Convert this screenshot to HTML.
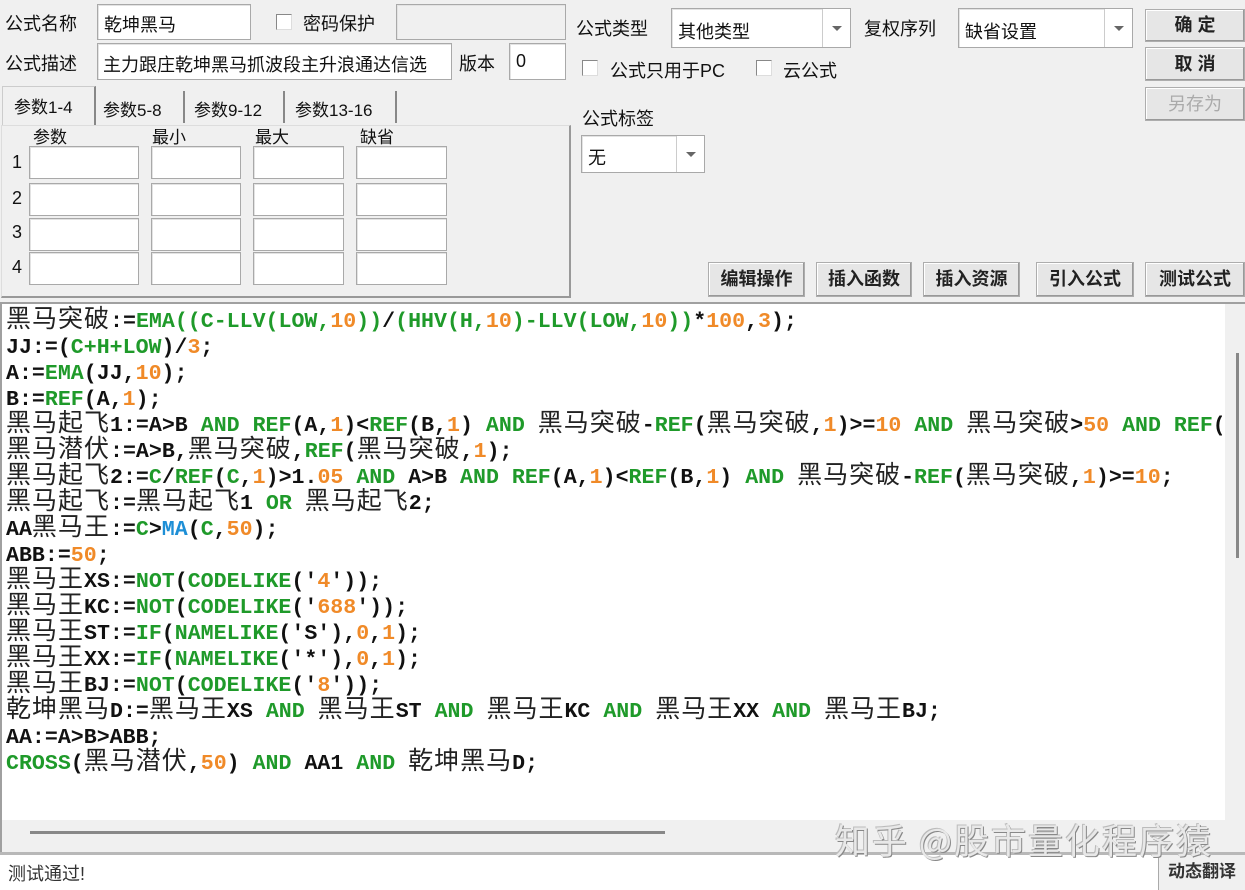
<!DOCTYPE html>
<html><head><meta charset="utf-8"><style>
*{margin:0;padding:0;box-sizing:border-box}
body{width:1245px;height:890px;background:#f0f0f0;position:relative;overflow:hidden;font-family:"Liberation Sans","Noto Sans CJK SC",sans-serif;font-size:18px;color:#111}
.a{position:absolute;white-space:nowrap}
.in{position:absolute;background:#fff;border:1px solid #a9a9a9;box-shadow:inset 1px 1px 0 #e3e3e3}
.cb{position:absolute;width:16px;height:16px;background:#fff;border:1px solid #888;border-right-color:#ddd;border-bottom-color:#ddd}
.btn{position:absolute;background:#e6e6e6;border:1px solid #adadad;box-shadow:inset -1px -1px 0 #999,inset 1px 1px 0 #fff;text-align:center;font-size:18px;font-weight:bold;color:#222}
.dd{position:absolute;top:0;right:0;bottom:0;width:28px;border-left:1px solid #ccc;background:#fff}
.dd:after{content:"";position:absolute;left:9px;top:50%;margin-top:-2px;border-left:5px solid transparent;border-right:5px solid transparent;border-top:5px solid #666}
.code{position:absolute;left:4px;font-family:"Liberation Mono",monospace;font-weight:bold;font-size:21.6px;line-height:26px;height:26px;white-space:nowrap;color:#111;letter-spacing:0}
.code .z{font-family:"Noto Sans CJK SC",sans-serif;font-weight:normal;font-size:25px;letter-spacing:1px;color:#222;line-height:0}
.g{color:#1f9a2a}.o{color:#f08a28}.b{color:#1e8fd6}
</style></head><body>
<div class="a" style="left:5px;top:10px;font-size:18px">公式名称</div>
<div class="in" style="left:97px;top:4px;width:154px;height:36px"><span class="a" style="left:6px;top:6px">乾坤黑马</span></div>
<div class="cb" style="left:276px;top:14px"></div>
<div class="a" style="left:303px;top:10px">密码保护</div>
<div class="in" style="left:396px;top:4px;width:170px;height:36px;background:#f0f0f0"></div>
<div class="a" style="left:5px;top:50px">公式描述</div>
<div class="in" style="left:97px;top:43px;width:355px;height:37px;overflow:hidden"><span class="a" style="left:5px;top:7px">主力跟庄乾坤黑马抓波段主升浪通达信选</span></div>
<div class="a" style="left:459px;top:50px">版本</div>
<div class="in" style="left:509px;top:43px;width:57px;height:37px"><span class="a" style="left:6px;top:7px">0</span></div>
<div class="a" style="left:2px;top:86px;width:94px;height:40px;border:1px solid #ccc;border-bottom:none;border-right:2px solid #888;background:#f0f0f0"></div>
<div class="a" style="left:14px;top:93px;font-size:17px">参数1-4</div>
<div class="a" style="left:103px;top:96px;font-size:17px">参数5-8</div>
<div class="a" style="left:183px;top:91px;width:2px;height:32px;background:#888"></div>
<div class="a" style="left:194px;top:96px;font-size:17px">参数9-12</div>
<div class="a" style="left:283px;top:91px;width:2px;height:32px;background:#888"></div>
<div class="a" style="left:295px;top:96px;font-size:17px">参数13-16</div>
<div class="a" style="left:395px;top:91px;width:2px;height:32px;background:#888"></div>
<div class="a" style="left:1px;top:125px;width:570px;height:173px;border:1px solid #ddd;border-right:2px solid #999;border-bottom:2px solid #999"></div>
<div class="a" style="left:33px;top:123px;font-size:17px">参数</div>
<div class="a" style="left:152px;top:123px;font-size:17px">最小</div>
<div class="a" style="left:255px;top:123px;font-size:17px">最大</div>
<div class="a" style="left:360px;top:123px;font-size:17px">缺省</div>
<div class="a" style="left:12px;top:152px">1</div>
<div class="a" style="left:12px;top:188px">2</div>
<div class="a" style="left:12px;top:222px">3</div>
<div class="a" style="left:12px;top:257px">4</div>
<div class="in" style="left:29px;top:146px;width:110px;height:33px"></div><div class="in" style="left:151px;top:146px;width:90px;height:33px"></div><div class="in" style="left:253px;top:146px;width:91px;height:33px"></div><div class="in" style="left:356px;top:146px;width:91px;height:33px"></div>
<div class="in" style="left:29px;top:183px;width:110px;height:33px"></div><div class="in" style="left:151px;top:183px;width:90px;height:33px"></div><div class="in" style="left:253px;top:183px;width:91px;height:33px"></div><div class="in" style="left:356px;top:183px;width:91px;height:33px"></div>
<div class="in" style="left:29px;top:218px;width:110px;height:33px"></div><div class="in" style="left:151px;top:218px;width:90px;height:33px"></div><div class="in" style="left:253px;top:218px;width:91px;height:33px"></div><div class="in" style="left:356px;top:218px;width:91px;height:33px"></div>
<div class="in" style="left:29px;top:252px;width:110px;height:33px"></div><div class="in" style="left:151px;top:252px;width:90px;height:33px"></div><div class="in" style="left:253px;top:252px;width:91px;height:33px"></div><div class="in" style="left:356px;top:252px;width:91px;height:33px"></div>
<div class="a" style="left:576px;top:15px">公式类型</div>
<div class="in" style="left:671px;top:8px;width:180px;height:40px"><span class="a" style="left:6px;top:9px">其他类型</span><div class="dd"></div></div>
<div class="a" style="left:864px;top:15px">复权序列</div>
<div class="in" style="left:958px;top:8px;width:175px;height:40px"><span class="a" style="left:6px;top:9px">缺省设置</span><div class="dd"></div></div>
<div class="btn" style="left:1145px;top:9px;width:100px;height:33px;line-height:31px">确 定</div>
<div class="btn" style="left:1145px;top:47px;width:100px;height:34px;line-height:32px">取 消</div>
<div class="btn" style="left:1145px;top:87px;width:100px;height:34px;line-height:32px;color:#aaa;font-weight:normal">另存为</div>
<div class="cb" style="left:582px;top:60px"></div>
<div class="a" style="left:610px;top:57px">公式只用于PC</div>
<div class="cb" style="left:756px;top:60px"></div>
<div class="a" style="left:783px;top:57px">云公式</div>
<div class="a" style="left:582px;top:105px">公式标签</div>
<div class="in" style="left:581px;top:135px;width:124px;height:38px"><span class="a" style="left:6px;top:8px">无</span><div class="dd"></div></div>
<div class="btn" style="left:708px;top:262px;width:97px;height:35px;line-height:33px">编辑操作</div>
<div class="btn" style="left:816px;top:262px;width:96px;height:35px;line-height:33px">插入函数</div>
<div class="btn" style="left:923px;top:262px;width:97px;height:35px;line-height:33px">插入资源</div>
<div class="btn" style="left:1036px;top:262px;width:98px;height:35px;line-height:33px">引入公式</div>
<div class="btn" style="left:1145px;top:262px;width:100px;height:35px;line-height:33px">测试公式</div>
<div class="a" style="left:0;top:302px;width:1245px;height:552px;background:#fff;border-top:2px solid #a0a0a0;border-left:2px solid #a0a0a0"></div>
<div class="a" style="left:1225px;top:304px;width:20px;height:516px;background:#f0f0f0"></div>
<div class="a" style="left:1236px;top:353px;width:3px;height:205px;background:#888"></div>
<div class="a" style="left:2px;top:820px;width:1243px;height:32px;background:#f0f0f0"></div>
<div class="a" style="left:30px;top:831px;width:635px;height:3px;background:#888"></div>
<div class="a" style="left:0;top:852px;width:1245px;height:3px;background:#b8b8b8"></div>
<div class="a" style="left:0;top:855px;width:1245px;height:35px;background:#fff"></div>
<div class="a" style="left:8px;top:860px;font-size:18px;color:#333">测试通过!</div>
<div class="a" style="left:1158px;top:855px;width:87px;height:35px;background:#f0f0f0;border-left:1px solid #aaa;font-size:17px;line-height:33px;text-align:center;font-weight:bold;color:#333">动态翻译</div>
<div class="a" style="left:2px;top:304px;width:1220px;height:516px;overflow:hidden">
<div class="a" style="left:0;top:5px;width:1220px;height:510px">
<div class="code" style="top:0"><span class="z">黑马突破</span>:=<span class="g">EMA((C-LLV(LOW,</span><span class="o">10</span><span class="g">))</span>/<span class="g">(HHV(H,</span><span class="o">10</span><span class="g">)-LLV(LOW,</span><span class="o">10</span><span class="g">))</span>*<span class="o">100</span>,<span class="o">3</span>);</div>
<div class="code" style="top:26px">JJ:=(<span class="g">C+H+LOW</span>)/<span class="o">3</span>;</div>
<div class="code" style="top:52px">A:=<span class="g">EMA</span>(JJ,<span class="o">10</span>);</div>
<div class="code" style="top:78px">B:=<span class="g">REF</span>(A,<span class="o">1</span>);</div>
<div class="code" style="top:104px"><span class="z">黑马起飞</span>1:=A&gt;B <span class="g">AND REF</span>(A,<span class="o">1</span>)&lt;<span class="g">REF</span>(B,<span class="o">1</span>) <span class="g">AND</span> <span class="z">黑马突破</span>-<span class="g">REF</span>(<span class="z">黑马突破</span>,<span class="o">1</span>)&gt;=<span class="o">10</span> <span class="g">AND</span> <span class="z">黑马突破</span>&gt;<span class="o">50</span> <span class="g">AND REF</span>(</div>
<div class="code" style="top:130px"><span class="z">黑马潜伏</span>:=A&gt;B,<span class="z">黑马突破</span>,<span class="g">REF</span>(<span class="z">黑马突破</span>,<span class="o">1</span>);</div>
<div class="code" style="top:156px"><span class="z">黑马起飞</span>2:=<span class="g">C</span>/<span class="g">REF</span>(<span class="g">C</span>,<span class="o">1</span>)&gt;1.<span class="o">05</span> <span class="g">AND</span> A&gt;B <span class="g">AND REF</span>(A,<span class="o">1</span>)&lt;<span class="g">REF</span>(B,<span class="o">1</span>) <span class="g">AND</span> <span class="z">黑马突破</span>-<span class="g">REF</span>(<span class="z">黑马突破</span>,<span class="o">1</span>)&gt;=<span class="o">10</span>;</div>
<div class="code" style="top:182px"><span class="z">黑马起飞</span>:=<span class="z">黑马起飞</span>1 <span class="g">OR</span> <span class="z">黑马起飞</span>2;</div>
<div class="code" style="top:208px">AA<span class="z">黑马王</span>:=<span class="g">C</span>&gt;<span class="b">MA</span>(<span class="g">C</span>,<span class="o">50</span>);</div>
<div class="code" style="top:234px">ABB:=<span class="o">50</span>;</div>
<div class="code" style="top:260px"><span class="z">黑马王</span>XS:=<span class="g">NOT</span>(<span class="g">CODELIKE</span>('<span class="o">4</span>'));</div>
<div class="code" style="top:286px"><span class="z">黑马王</span>KC:=<span class="g">NOT</span>(<span class="g">CODELIKE</span>('<span class="o">688</span>'));</div>
<div class="code" style="top:312px"><span class="z">黑马王</span>ST:=<span class="g">IF</span>(<span class="g">NAMELIKE</span>('S'),<span class="o">0</span>,<span class="o">1</span>);</div>
<div class="code" style="top:338px"><span class="z">黑马王</span>XX:=<span class="g">IF</span>(<span class="g">NAMELIKE</span>('*'),<span class="o">0</span>,<span class="o">1</span>);</div>
<div class="code" style="top:364px"><span class="z">黑马王</span>BJ:=<span class="g">NOT</span>(<span class="g">CODELIKE</span>('<span class="o">8</span>'));</div>
<div class="code" style="top:390px"><span class="z">乾坤黑马</span>D:=<span class="z">黑马王</span>XS <span class="g">AND</span> <span class="z">黑马王</span>ST <span class="g">AND</span> <span class="z">黑马王</span>KC <span class="g">AND</span> <span class="z">黑马王</span>XX <span class="g">AND</span> <span class="z">黑马王</span>BJ;</div>
<div class="code" style="top:416px">AA:=A&gt;B&gt;ABB;</div>
<div class="code" style="top:442px"><span class="g">CROSS</span>(<span class="z">黑马潜伏</span>,<span class="o">50</span>) <span class="g">AND</span> AA1 <span class="g">AND</span> <span class="z">乾坤黑马</span>D;</div>
</div>
</div>
<div class="a" style="left:835px;top:814px;font-family:'Noto Sans CJK SC',sans-serif;font-size:35px;letter-spacing:2px;color:#e8e8e8;text-shadow:1px 1px 0 #888,-1px -1px 0 #bbb">知乎 @股市量化程序猿</div>
</body></html>
